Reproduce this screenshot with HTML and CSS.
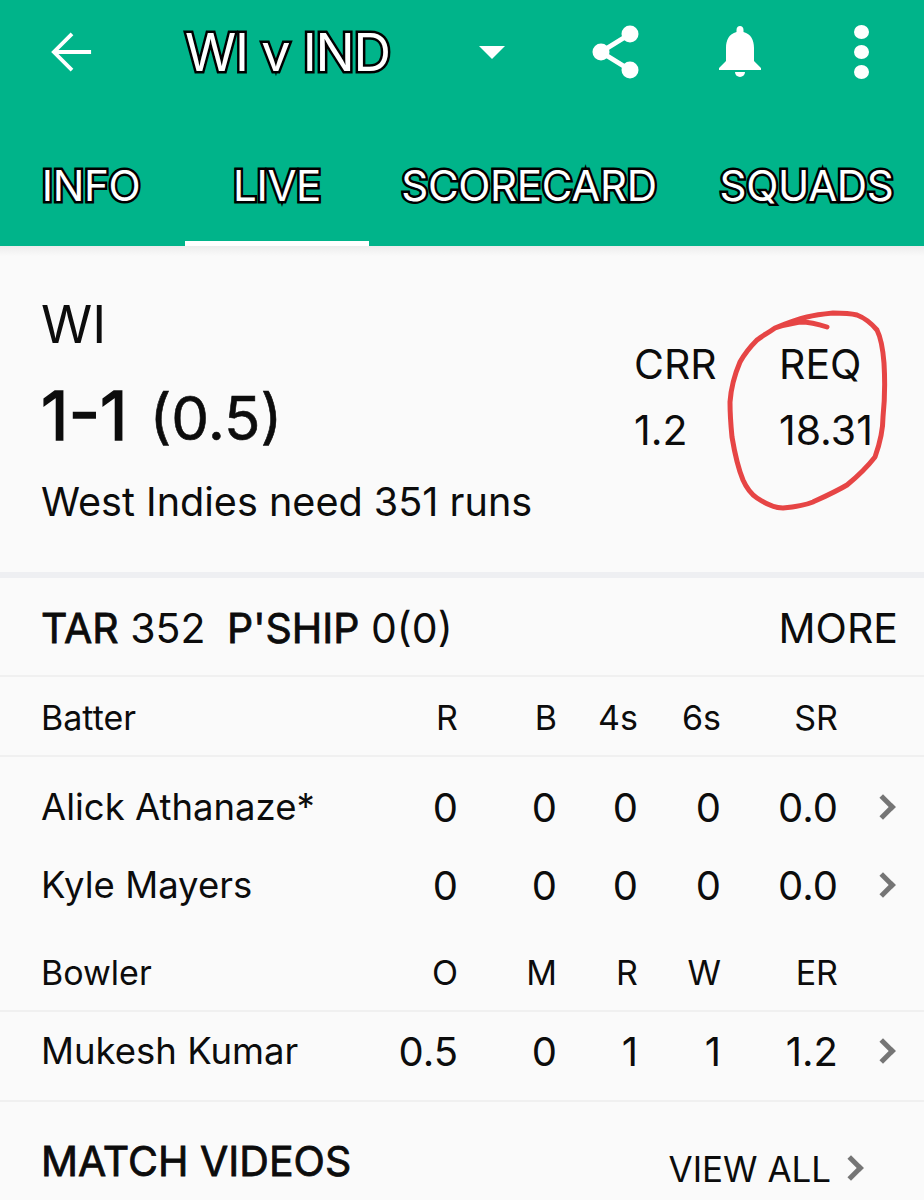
FILE: index.html
```html
<!DOCTYPE html>
<html lang="en">
<head>
    <meta charset="UTF-8">
    <title>WI v IND</title>
    <link rel="stylesheet" href="styles.css">
</head>
<body>
    <header class="appbar">
        <div class="toolbar">
            <svg class="icon-back" viewBox="0 0 44 44"><path d="M42 22H4M22 3L3 22l19 19" /></svg>
            <h1 class="match-title">WI v IND</h1>
            <span class="caret"></span>
            <svg class="icon-share" viewBox="0 0 48 54">
                <circle cx="38" cy="9" r="8.5" />
                <circle cx="9" cy="27" r="8.5" />
                <circle cx="38" cy="45" r="8.5" />
                <path d="M38 9L9 27l29 18" />
            </svg>
            <svg class="icon-bell" viewBox="0 0 44 52">
                <path d="M22 0c2 0 3.500 1.500 3.500 4v2C33 8 36 14 36 22v13l7 7v2H1v-2l7-7V22C8 14 11 8 18.500 6V4C18.500 1.500 20 0 22 0z" />
                <path d="M17 46h10a5 5 0 0 1-10 0z" />
            </svg>
            <div class="icon-dots"><i></i><i></i><i></i></div>
        </div>
        <nav class="tabs">
            <a class="tab tab-info">INFO</a>
            <a class="tab tab-live active">LIVE</a>
            <a class="tab tab-score">SCORECARD</a>
            <a class="tab tab-squads">SQUADS</a>
        </nav>
    </header>

    <section class="summary">
        <div class="score-side">
            <div class="team">WI</div>
            <div class="score"><b>1-1</b> <span>(0.5)</span></div>
            <div class="need">West Indies need 351 runs</div>
        </div>
        <div class="rate crr">
            <div>CRR</div>
            <div>1.2</div>
        </div>
        <div class="rate req">
            <div>REQ</div>
            <div>18.31</div>
        </div>
        <svg class="scribble" viewBox="0 0 924 1200">
            <path d="M827 327C815 323 806 322 800 322C790 324 782 325 775 328C768 333 762 336 757 340C750 347 745 353 740 362C734 376 731 388 730 402C730 415 731 427 732 437C735 455 738 468 743 480C747 489 751 494 757 498C766 504 774 508 783 508C794 507 803 506 813 502C826 496 837 491 847 485C858 476 868 466 875 457C880 443 883 431 883 417C885 398 885 380 884 363C883 350 881 338 877 330C871 323 865 318 857 315C849 313 841 313 833 313C823 314 815 315 807 317C795 320 785 324 775 328" />
        </svg>
    </section>

    <section class="partnership">
        <div><b>TAR</b> 352 <b class="pship">P'SHIP</b> 0(0)</div>
        <div>MORE</div>
    </section>

    <div class="row head-row batter-head">
        <div>Batter</div><div>R</div><div>B</div><div>4s</div><div>6s</div><div>SR</div><div></div>
    </div>
    <div class="row player first-player">
        <div>Alick Athanaze*</div><div>0</div><div>0</div><div>0</div><div>0</div><div>0.0</div>
        <div class="more"><span class="chevron"></span></div>
    </div>
    <div class="row player second-player">
        <div>Kyle Mayers</div><div>0</div><div>0</div><div>0</div><div>0</div><div>0.0</div>
        <div class="more"><span class="chevron"></span></div>
    </div>
    <div class="row head-row bowler-head">
        <div>Bowler</div><div>O</div><div>M</div><div>R</div><div>W</div><div>ER</div><div></div>
    </div>
    <div class="row player bowler-row">
        <div>Mukesh Kumar</div><div>0.5</div><div>0</div><div>1</div><div>1</div><div>1.2</div>
        <div class="more"><span class="chevron"></span></div>
    </div>

    <section class="videos">
        <h2>MATCH VIDEOS</h2>
        <div class="view-all">VIEW ALL <span class="chevron"></span></div>
    </section>
</body>
</html>
```

FILE: styles.css
```css
html, body {
    height: 1200px;
    overflow: hidden;
}
body {
    position: relative;
    margin: 0;
    background-color: #fafafa;
    color: #0c0c0c;
    font-family: Inter, "Liberation Sans", Arial, sans-serif;
}

/* green header */
.appbar {
    height: 246px;
    background-color: #00b48a;
    color: white;
}
.toolbar {
    display: flex;
    align-items: center;
    height: 104px;
    padding-left: 51px;
}
.icon-back {
    width: 42px;
    height: 42px;
    fill: none;
    stroke: white;
    stroke-width: 4;
}
.match-title {
    margin: 0 0 0 92px;
    width: 294px;
    font-size: 52px;
    font-weight: normal;
    letter-spacing: -1.2px;
    -webkit-text-stroke: 5px black;
    paint-order: stroke fill;
}
.caret {
    width: 0;
    height: 0;
    border-left: 13px solid transparent;
    border-right: 13px solid transparent;
    border-top: 13px solid white;
}
.icon-share {
    width: 48px;
    height: 54px;
    margin-left: 87px;
    fill: white;
}
.icon-share path {
    fill: none;
    stroke: white;
    stroke-width: 5;
}
.icon-bell {
    width: 44px;
    height: 52px;
    margin-left: 78px;
    fill: white;
}
.icon-dots {
    display: flex;
    flex-direction: column;
    gap: 6px;
    margin-left: 92px;
}
.icon-dots i {
    width: 15px;
    height: 14px;
    border-radius: 50%;
    background-color: white;
}

.tabs {
    display: flex;
    height: 142px;
    font-size: 42px;
}
.tab {
    box-sizing: border-box;
    padding-top: 56px;
    text-align: center;
    letter-spacing: -0.3px;
    -webkit-text-stroke: 5px black;
    paint-order: stroke fill;
}
.tab-info {
    width: 185px;
    padding-right: 3px;
}
.tab-live {
    width: 184px;
}
.tab-score {
    width: 320px;
}
.tab-squads {
    width: 235px;
}
.tab.active {
    border-bottom: 5px solid white;
}

/* score block */
.summary {
    display: flex;
    box-sizing: border-box;
    height: 326px;
    padding: 50px 0 0 41px;
    background-image: linear-gradient(#ececec, #fafafa 10px);
}
.score-side {
    width: 593px;
}
.team {
    font-size: 52px;
    line-height: 58px;
}
.score {
    margin-top: 23px;
    line-height: 76px;
    font-size: 60px;
}
.score b {
    font-size: 68px;
    font-weight: normal;
    -webkit-text-stroke: 1.5px #0c0c0c;
}
.score span {
    margin-left: 5px;
    -webkit-text-stroke: .6px #0c0c0c;
}
.need {
    margin-top: 23px;
    font-size: 39.600px;
    line-height: 46px;
}
.rate {
    margin-top: 35px;
    font-size: 41px;
    line-height: 66px;
}
.crr {
    width: 145px;
}
.scribble {
    position: absolute;
    top: 0;
    left: 0;
    width: 924px;
    height: 1200px;
    fill: none;
    stroke: #e64545;
    stroke-width: 5;
    stroke-linecap: round;
    stroke-linejoin: round;
    pointer-events: none;
}

/* target line */
.partnership {
    display: flex;
    justify-content: space-between;
    align-items: center;
    box-sizing: border-box;
    height: 105px;
    padding: 3px 26px 0 41px;
    border-top: 6px solid #eeeff2;
    border-bottom: 2px solid #f0f0f0;
    font-size: 41px;
}
.partnership b {
    font-weight: normal;
    -webkit-text-stroke: .8px #0c0c0c;
}
.pship {
    margin-left: 10px;
}

/* batting and bowling table */
.row {
    display: grid;
    grid-template-columns: 317px 100px 99px 81px 83px 117px 86px;
    align-items: center;
    box-sizing: border-box;
    padding-left: 41px;
}
.row > div:not(:first-child) {
    text-align: right;
}
.row > div.more {
    display: flex;
    align-items: center;
    padding-left: 36px;
}
.head-row {
    font-size: 34px;
}
.batter-head {
    height: 80px;
    padding-top: 3px;
    border-bottom: 2px solid #f0f0f0;
}
.bowler-head {
    height: 78px;
    border-bottom: 2px solid #f0f0f0;
}
.player {
    font-size: 40px;
}
.player > div:first-child {
    font-size: 36.500px;
}
.first-player {
    height: 100px;
}
.second-player {
    height: 56px;
    margin-bottom: 21px;
}
.bowler-row {
    height: 90px;
    padding-bottom: 10px;
    border-bottom: 2px solid #f0f0f0;
}
.chevron {
    display: inline-block;
    width: 13px;
    height: 13px;
    border-top: 5px solid #757575;
    border-right: 5px solid #757575;
    transform: rotate(45deg);
}

/* videos */
.videos {
    display: flex;
    justify-content: space-between;
    padding: 34px 64px 0 41px;
}
.videos h2 {
    margin: 0;
    font-size: 41px;
    font-weight: normal;
    -webkit-text-stroke: .8px #0c0c0c;
}
.view-all {
    margin-top: 12px;
    font-size: 35px;
}
.view-all .chevron {
    margin-left: 1px;
    margin-bottom: 5px;
}
```
